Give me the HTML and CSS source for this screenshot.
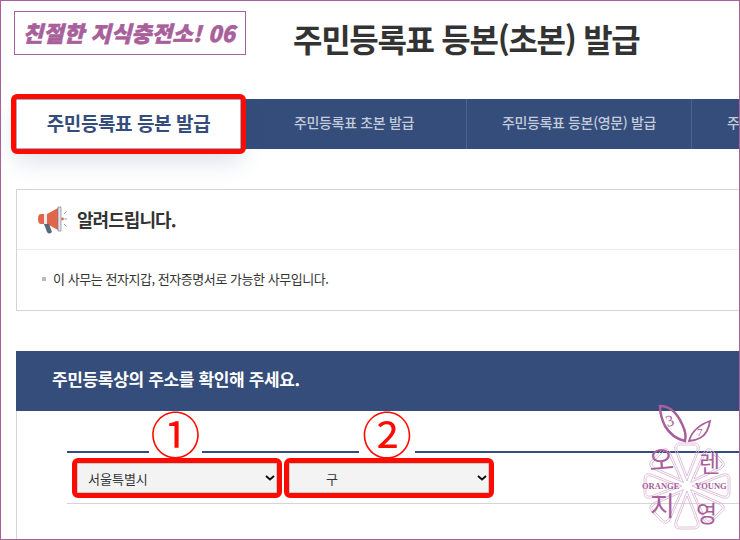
FILE: index.html
```html
<!DOCTYPE html>
<html lang="ko">
<head>
<meta charset="utf-8">
<title>주민등록표 등본(초본) 발급</title>
<link rel="stylesheet" href="styles.css">
</head>
<body>
<div class="frame">
  <header class="top">
    <div class="badge">친절한 지식충전소! 06</div>
    <h1 class="title">주민등록표 등본(초본) 발급</h1>
  </header>
  <nav class="tabs">
    <a class="tab tab-active">주민등록표 등본 발급</a>
    <a class="tab">주민등록표 초본 발급</a>
    <a class="tab">주민등록표 등본(영문) 발급</a>
    <a class="tab">주민등록표 초본(영문) 발급</a>
  </nav>
  <section class="notice">
    <div class="notice-head">
      <svg class="mega" width="30" height="28" viewBox="0 0 30 28">
        <path d="M4 8 Q1 8 1 13 Q1 18 4 18 L7 18 L7 8 Z" fill="#e0654a"/>
        <path d="M7 8 L10 8 L10 18 L7 18 Z" fill="#e9e9ee"/>
        <path d="M10 8 L21 2 L21 24 L10 18 Z" fill="#e0654a"/>
        <path d="M21 1 L24 1 L24 25 L21 25 Z" fill="#dfe2e8" stroke="#6b7688" stroke-width=".6"/>
        <path d="M7 18 L12 18 L15 26 Q12 29 10 26 Z" fill="#5b6878"/>
        <circle cx="25.500" cy="13" r="1.400" fill="#e0654a"/>
        <path d="M27 8 L29.500 5.500 M27.500 13 L30 13 M27 18 L29.500 20.500" stroke="#7c8698" stroke-width=".8" fill="none"/>
      </svg>
      <h2 class="notice-title">알려드립니다.</h2>
    </div>
    <p class="notice-text"><span class="sq"></span>이 사무는 전자지갑, 전자증명서로 가능한 사무입니다.</p>
  </section>
  <section class="address">
    <h2 class="address-bar">주민등록상의 주소를 확인해 주세요.</h2>
    <div class="address-body">
      <div class="marks">
        <span class="rule rule-a"></span>
        <span class="num num-a">①</span>
        <span class="rule rule-b"></span>
        <span class="num num-b">②</span>
        <span class="rule rule-c"></span>
      </div>
      <div class="selects">
        <select class="sel sel-a"><option>서울특별시</option></select>
        <select class="sel sel-b"><option>구</option></select>
      </div>
    </div>
  </section>
  <svg class="mark" width="110" height="140" viewBox="0 0 110 140">
    <g fill="none" stroke="#d9b2d3" stroke-width=".8">
      <g id="petal">
        <path d="M57 81 L45 50 Q43.500 43 50 43 L64 43 Q70.500 43 69 50 Z"/>
        <path d="M57 76 L47 50 Q46 45 50 45 L64 45 Q68 45 67 50 Z"/>
      </g>
      <use href="#petal" transform="rotate(45 57 86)"/>
      <use href="#petal" transform="rotate(90 57 86)"/>
      <use href="#petal" transform="rotate(135 57 86)"/>
      <use href="#petal" transform="rotate(180 57 86)"/>
      <use href="#petal" transform="rotate(225 57 86)"/>
      <use href="#petal" transform="rotate(270 57 86)"/>
      <use href="#petal" transform="rotate(315 57 86)"/>
    </g>
    <path d="M30 6 Q44 6 52 24 Q57 34 55 41 Q42 38 35 26 Q30 16 30 6 Z" fill="none" stroke="#a85f9b" stroke-width="2.500"/>
    <path d="M59 41 Q63 27 80 21 Q78 34 70 38 Q64 41 59 41 Z" fill="none" stroke="#a85f9b" stroke-width="1.800"/>
    <text class="mk-leaf" x="36" y="26" transform="rotate(-15 40 22)">3</text>
    <text class="mk-leaf mk-leaf-sm" x="67" y="36">7</text>
    <text class="mk-han mk-han-wide" x="19" y="70" transform="rotate(-5 32 62)">오</text>
    <text class="mk-han" x="69" y="72">렌</text>
    <text class="mk-han mk-han-wide" x="20" y="116">지</text>
    <text class="mk-han" x="66" y="122">영</text>
    <text class="mk-en" x="12" y="89">ORANGE</text>
    <text class="mk-en" x="65" y="89">YOUNG</text>
  </svg>
</div>
</body>
</html>
```
FILE: styles.css
```css
* { box-sizing: border-box; }
html, body { margin: 0; padding: 0; }
body { background: #fff; font-family: "Noto Sans CJK KR", "Noto Sans", sans-serif; color: #333; }
.frame {
  position: relative;
  width: 740px;
  height: 540px;
  border: 1px solid #a85f9b;
  overflow: hidden;
}
.top { display: flex; align-items: flex-start; height: 98px; padding: 10px 0 0 13px; }
.badge {
  width: 232px;
  height: 44px;
  border: 1px solid #a85f9b;
  color: #a85f9b;
  font-size: 22px;
  font-weight: 900;
  font-style: italic;
  line-height: 41px;
  letter-spacing: .2px;
  padding-right: 2px;
  text-align: center;
  white-space: nowrap;
  -webkit-text-stroke: .6px #a85f9b;
}
.title {
  margin: 2px 0 0 47px;
  font-size: 32px;
  font-weight: 700;
  line-height: 50px;
  letter-spacing: -1.300px;
  white-space: nowrap;
  color: #333;
}
.tabs {
  display: flex;
  width: 900px;
  height: 50px;
  margin-left: 15px;
  background: #344d7a;
}
.tab {
  flex: 0 0 225px;
  border-left: 1px solid #4a6290;
  color: #c3cbdb;
  font-size: 14px;
  font-weight: 500;
  line-height: 46px;
  text-align: center;
  white-space: nowrap;
  letter-spacing: -.35px;
}
.tab-active {
  position: relative;
  background: #fff;
  border: 1px solid #9fb0c8;
  color: #344d7a;
  font-size: 19px;
  font-weight: 700;
  outline: 5px solid #fe0b00;
  border-radius: 1px;
  box-shadow: 0 12px 24px rgba(52, 77, 122, .18);
  letter-spacing: -.4px;
}
.notice {
  width: 800px;
  height: 122px;
  margin: 40px 0 0 15px;
  border: 1px solid #d5d5d5;
}
.notice-head {
  display: flex;
  align-items: center;
  gap: 10px;
  height: 60px;
  padding-left: 20px;
  border-bottom: 1px solid #ebebeb;
}
.mega { flex: none; }
.notice-title {
  margin: 0 0 2px;
  font-size: 18px;
  font-weight: 700;
  letter-spacing: -.95px;
  color: #333;
}
.notice-text {
  display: flex;
  align-items: center;
  margin: 19px 0 0 25px;
  font-size: 13px;
  line-height: 20px;
  letter-spacing: -.45px;
  color: #333;
}
.sq { width: 4px; height: 4px; margin-right: 7px; background: #bbb; }
.address { width: 800px; margin: 40px 0 0 15px; }
.address-bar {
  height: 60px;
  margin: 0;
  padding-left: 36px;
  background: #344d7a;
  color: #fff;
  font-size: 17px;
  font-weight: 700;
  line-height: 56px;
  letter-spacing: -.35px;
}
.address-body { height: 140px; padding-left: 50px; border-left: 1px solid #d5d5d5; }
.marks { display: flex; align-items: flex-end; height: 42px; }
.rule { height: 2px; background: #344d7a; }
.rule-a { width: 82px; }
.rule-b { width: 157px; }
.rule-c { flex: 1; }
.num {
  color: #fe0b00;
  font-family: "Noto Sans CJK KR", sans-serif;
  font-size: 50px;
  font-weight: 400;
  line-height: 46px;
  text-align: center;
  margin-bottom: -2px;
}
.num-a { width: 53px; }
.num-b { width: 56px; }
.selects {
  display: flex;
  gap: 12px;
  height: 51px;
  padding: 10px 0 0 10px;
  border-bottom: 1px solid #d5d5d5;
}
.sel {
  width: 200px;
  height: 30px;
  appearance: none;
  border: 1px solid #ccc;
  border-radius: 1px;
  outline: 5px solid #fe0b00;
  background: #f3f3f3 url("data:image/svg+xml,%3Csvg xmlns='http://www.w3.org/2000/svg' width='10' height='6'%3E%3Cpath d='M1 1l4 3.500 4-3.500' fill='none' stroke='%23111' stroke-width='2'/%3E%3C/svg%3E") no-repeat right 1px center;
  font-family: "Noto Sans CJK KR", sans-serif;
  font-size: 13px;
  color: #333;
}
.sel-a { padding-left: 10px; }
.sel-b { padding-left: 36px; }
.mark { position: absolute; right: -1px; bottom: -1px; }
.mk-leaf { fill: #a85f9b; font-family: "Liberation Serif", serif; font-size: 16px; }
.mk-leaf-sm { font-size: 11px; }
.mk-han { fill: #a85f9b; font-family: "Noto Sans CJK KR", sans-serif; font-size: 23px; font-weight: 400; }
.mk-han-wide { font-size: 27px; }
.mk-en { fill: #a85f9b; font-family: "Liberation Serif", serif; font-size: 8.500px; font-weight: 700; }
```
